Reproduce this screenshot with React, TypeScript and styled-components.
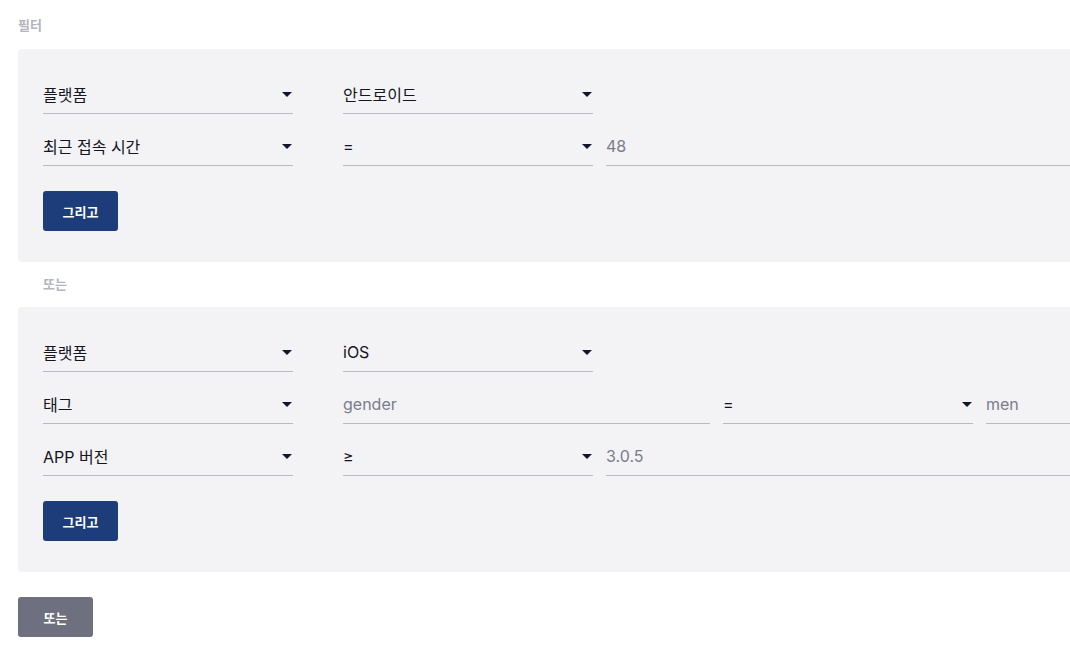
import styled, { createGlobalStyle } from 'styled-components';

const GlobalStyle = createGlobalStyle`
  html, body {
    margin: 0;
    padding: 0;
    background: #ffffff;
    overflow: hidden;
  }
  body {
    font-family: "Inter", "Noto Sans CJK KR", sans-serif;
    color: #14161f;
  }
`;

type Field =
  | { kind: 'select'; value: string; lead?: boolean }
  | { kind: 'input'; value: string; width?: number };

const groups: Field[][][] = [
  [
    [
      { kind: 'select', value: '플랫폼', lead: true },
      { kind: 'select', value: '안드로이드' },
    ],
    [
      { kind: 'select', value: '최근 접속 시간', lead: true },
      { kind: 'select', value: '=' },
      { kind: 'input', value: '48' },
    ],
  ],
  [
    [
      { kind: 'select', value: '플랫폼', lead: true },
      { kind: 'select', value: 'iOS' },
    ],
    [
      { kind: 'select', value: '태그', lead: true },
      { kind: 'input', value: 'gender', width: 367 },
      { kind: 'select', value: '=' },
      { kind: 'input', value: 'men' },
    ],
    [
      { kind: 'select', value: 'APP 버전', lead: true },
      { kind: 'select', value: '≥' },
      { kind: 'input', value: '3.0.5' },
    ],
  ],
];

export default function App() {
  return (
    <>
      <GlobalStyle />
      <StyledPage>
        <StyledTitle>필터</StyledTitle>
        {groups.map((rows, gi) => (
          <div key={gi}>
            {gi > 0 && <StyledOrLabel>또는</StyledOrLabel>}
            <StyledPanel>
              {rows.map((fields, ri) => (
                <StyledRow key={ri}>
                  {fields.map((f, fi) =>
                    f.kind === 'select' ? (
                      <StyledSelect key={fi} $lead={f.lead}>
                        <span>{f.value}</span>
                        <StyledCaret />
                      </StyledSelect>
                    ) : (
                      <StyledInput key={fi} $width={f.width}>
                        {f.value}
                      </StyledInput>
                    )
                  )}
                </StyledRow>
              ))}
              <StyledButton $tone="primary">그리고</StyledButton>
            </StyledPanel>
          </div>
        ))}
        <StyledFooter>
          <StyledButton $tone="muted">또는</StyledButton>
        </StyledFooter>
      </StyledPage>
    </>
  );
}

const StyledPage = styled.div`
  width: 1200px;
  padding: 15px 0 0 18px;
`;

const StyledTitle = styled.div`
  font-size: 13px;
  font-weight: 700;
  line-height: 20px;
  color: #b3b4c0;
  margin-bottom: 14px;
`;

const StyledOrLabel = styled.div`
  font-size: 13px;
  font-weight: 700;
  line-height: 20px;
  color: #b3b4c0;
  padding-left: 25px;
  margin: 12px 0 13px;
`;

const StyledPanel = styled.div`
  background: #f3f3f5;
  border-radius: 4px;
  padding: 25px 0 31px 25px;
`;

const StyledRow = styled.div`
  display: flex;
  gap: 13px;
  margin-bottom: 12px;

  &:last-of-type {
    margin-bottom: 25px;
  }
`;

const StyledSelect = styled.div<{ $lead?: boolean }>`
  box-sizing: border-box;
  width: 250px;
  height: 40px;
  flex: none;
  display: flex;
  align-items: center;
  justify-content: space-between;
  padding-right: 1px;
  border-bottom: 1px solid #b9bac6;
  font-size: 16px;
  color: #14161f;
  margin-right: ${(p) => (p.$lead ? '37px' : '0')};
`;

const StyledCaret = styled.i`
  width: 0;
  height: 0;
  border-left: 5px solid transparent;
  border-right: 5px solid transparent;
  border-top: 5px solid #12162b;
  margin-top: 2px;
`;

const StyledInput = styled.div<{ $width?: number }>`
  box-sizing: border-box;
  height: 40px;
  display: flex;
  align-items: center;
  border-bottom: 1px solid #b9bac6;
  font-size: 16px;
  color: #7a7c8b;
  ${(p) => (p.$width ? `width: ${p.$width}px; flex: none;` : 'flex: 1;')}
`;

const StyledFooter = styled.div`
  padding-top: 25px;
`;

const StyledButton = styled.button<{ $tone: 'primary' | 'muted' }>`
  display: block;
  width: 75px;
  height: 40px;
  border: none;
  border-radius: 3px;
  font-family: inherit;
  font-size: 13px;
  font-weight: 700;
  color: #ffffff;
  background: ${(p) => (p.$tone === 'primary' ? '#1c3c7a' : '#6e7080')};
  cursor: pointer;
`;
